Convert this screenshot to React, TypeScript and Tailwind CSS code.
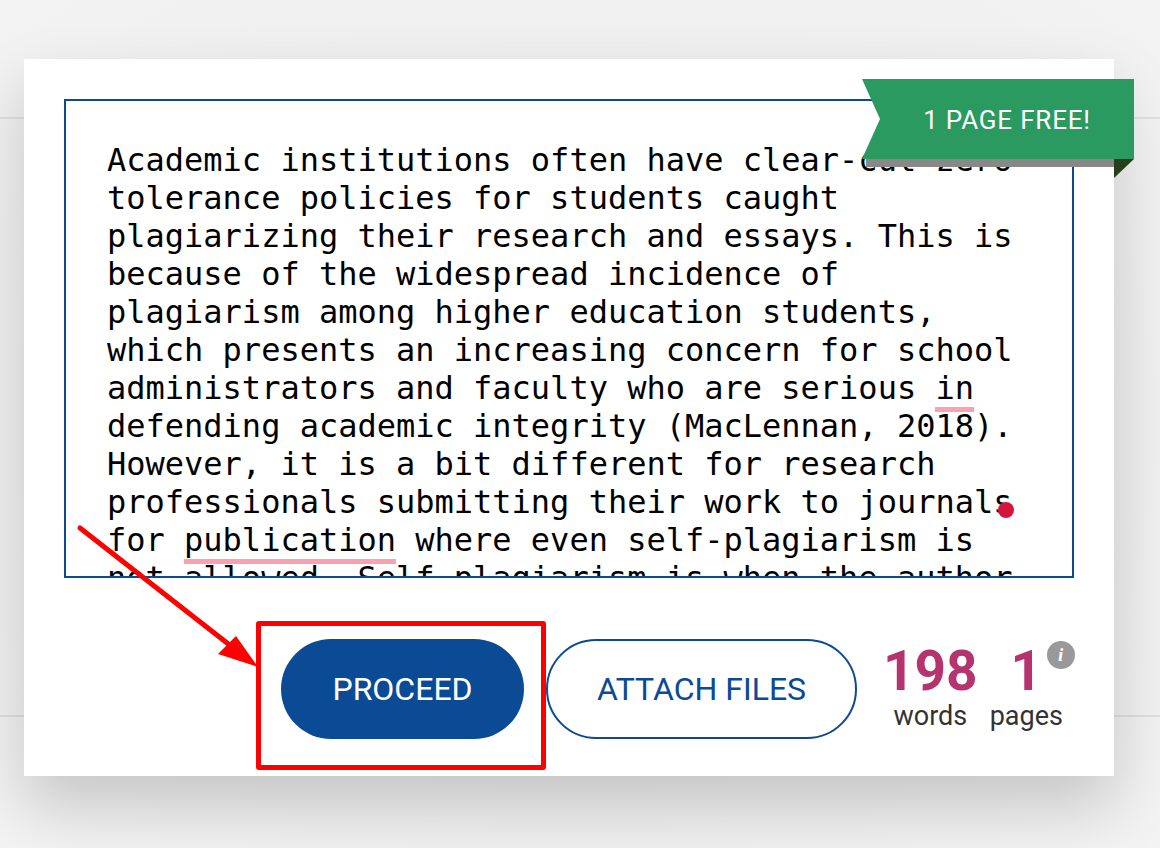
import React from "react";

const lines = [
  "Academic institutions often have clear-cut zero-",
  "tolerance policies for students caught",
  "plagiarizing their research and essays. This is",
  "because of the widespread incidence of",
  "plagiarism among higher education students,",
  "which presents an increasing concern for school",
  "administrators and faculty who are serious @in@",
  "defending academic integrity (MacLennan, 2018).",
  "However, it is a bit different for research",
  "professionals submitting their work to journals",
  "for @publication@ where even self-plagiarism is",
  "not allowed. Self-plagiarism is when the author",
];

function Line({ text }: { text: string }) {
  const parts = text.split("@");
  return (
    <div className="whitespace-pre">
      {parts.map((p, i) =>
        i % 2 === 1 ? (
          <span key={i} className="border-b-[5px] border-[#f7a1b3]">
            {p}
          </span>
        ) : (
          <span key={i}>{p}</span>
        )
      )}
    </div>
  );
}

export default function App() {
  return (
    <div className="relative w-[1160px] h-[848px] overflow-hidden bg-[radial-gradient(ellipse_at_center,#e4e4e4_0%,#efefef_60%,#f3f3f3_100%)] font-['Roboto',sans-serif]">
      {/* page lines behind the modal */}
      <div className="absolute left-0 right-0 top-[117px] h-[2px] bg-[#e0e0e0]" />
      <div className="absolute left-0 right-0 top-[715px] h-[2px] bg-[#e0e0e0]" />

      <div className="relative pt-[59px] pl-[24px]">
        <div className="relative w-[1090px] h-[717px] bg-white shadow-[0_30px_60px_rgba(0,0,0,0.18)] pt-[40px] pl-[40px]">
          {/* text area */}
          <div className="w-[1010px] h-[479px] border-2 border-[#0b4a94] overflow-hidden pt-[40px] pl-[41px] font-['DejaVu_Sans_Mono',monospace] text-[32px] leading-[38px] text-black">
            {lines.map((l, i) => (
              <Line key={i} text={l} />
            ))}
          </div>
          <div className="absolute left-[974px] top-[443px] w-[16px] h-[16px] rounded-full bg-[#d4163c]" />

          {/* actions */}
          <div className="flex items-start mt-[61px] ml-[217px]">
            <button className="w-[243px] h-[100px] rounded-full bg-[#0b4a94] text-white text-[32px]">
              PROCEED
            </button>
            <button className="ml-[22px] w-[311px] h-[100px] rounded-full border-2 border-[#0b4a94] bg-white text-[#0b4a94] text-[32px]">
              ATTACH FILES
            </button>
            <div className="ml-[26px] flex gap-[12px] mt-[4px]">
              <div className="flex flex-col items-center">
                <span className="text-[55px] font-bold leading-[56px] text-[#b5336e]">198</span>
                <span className="text-[27px] leading-[34px] text-[#333]">words</span>
              </div>
              <div className="relative flex flex-col items-center">
                <span className="text-[55px] font-bold leading-[56px] text-[#b5336e]">1</span>
                <span className="text-[27px] leading-[34px] text-[#333]">pages</span>
                <span className="absolute left-[57px] top-[-2px] w-[28px] h-[28px] rounded-full bg-[#999] text-white text-[19px] leading-[28px] text-center italic font-bold font-['Liberation_Serif',serif]">
                  i
                </span>
              </div>
            </div>
          </div>

          {/* red annotation box */}
          <div className="absolute left-[232px] top-[562px] w-[290px] h-[149px] border-[5px] border-[#ff0000] rounded-[3px]" />
        </div>

        {/* ribbon */}
        <svg className="absolute left-[862px] top-[79px]" width="272" height="100" viewBox="0 0 272 100">
          <rect x="4" y="80" width="248" height="8" fill="#888888" />
          <polygon points="252,80 272,80 252,99" fill="#26401c" />
          <polygon points="0,0 272,0 272,80 0,80 18,40" fill="#2a9a60" />
        </svg>
        <div className="absolute left-[880px] top-[80px] w-[254px] h-[80px] flex items-center justify-center text-white text-[26px] tracking-[0.8px]">
          1 PAGE FREE!
        </div>
      </div>

      {/* arrow */}
      <svg className="absolute left-0 top-0" width="1160" height="848" viewBox="0 0 1160 848">
        <line x1="80" y1="528" x2="236" y2="650" stroke="#ff0000" strokeWidth="5" strokeLinecap="round" />
        <polygon points="258,667 218,654 236,636" fill="#ff0000" />
      </svg>
    </div>
  );
}
